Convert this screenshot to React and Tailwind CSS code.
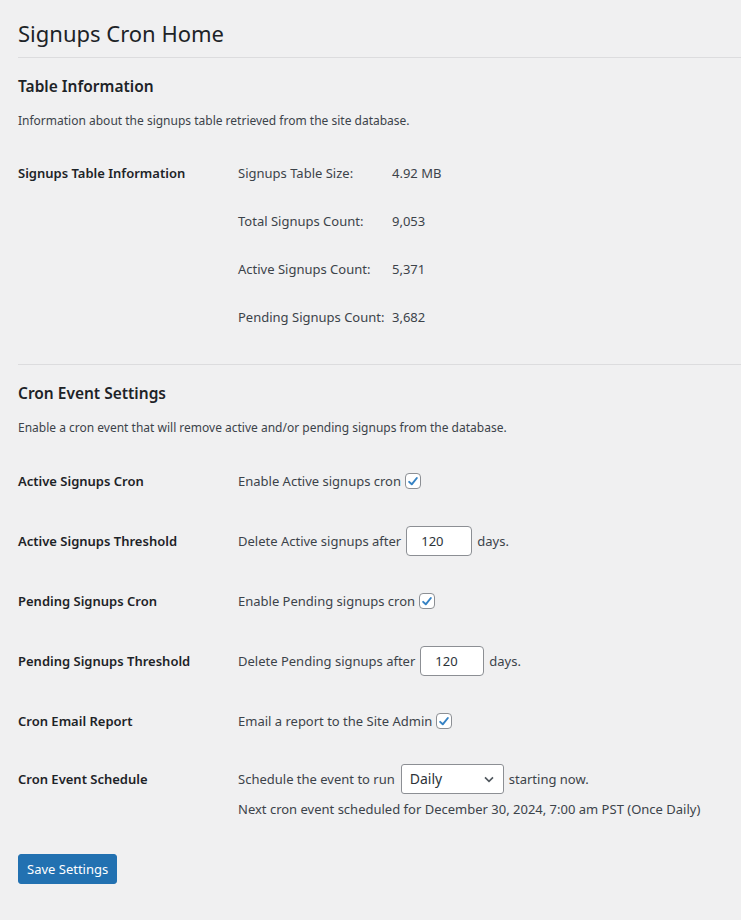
import React from 'react';

const font = { fontFamily: '"Noto Sans", "Open Sans", sans-serif' };

function Check() {
  return (
    <span className="inline-flex items-center justify-center w-4 h-4 ml-1 align-middle bg-white border border-[#8c8f94] rounded-[4px]">
      <svg viewBox="0 0 20 20" className="w-[15px] h-[15px]">
        <path d="M4.5 10.5 L8.2 14 L15.5 5" fill="none" stroke="#3582c4" strokeWidth="2.8" strokeLinecap="round" strokeLinejoin="round" />
      </svg>
    </span>
  );
}

function NumInput({ value, w }) {
  return (
    <span className={`inline-flex items-center h-[30px] ${w} mx-[5px] px-2 bg-white border border-[#8c8f94] rounded-[4px] text-[#2c3338]`}>
      <span className="ml-[6px]">{value}</span>
    </span>
  );
}

function Row({ label, children, h = 'h-[60px]' }) {
  return (
    <div className={`grid grid-cols-[220px_1fr] items-center ${h}`}>
      <div className="font-semibold text-[#1d2327]">{label}</div>
      <div>{children}</div>
    </div>
  );
}

const INFO = [
  ['Signups Table Size:', '4.92 MB'],
  ['Total Signups Count:', '9,053'],
  ['Active Signups Count:', '5,371'],
  ['Pending Signups Count:', '3,682'],
];

export default function App() {
  return (
    <div className="min-h-[920px] bg-[#f0f0f1] pl-[18px] text-[13px] leading-5 text-[#3c434a]" style={font}>
      <h1 className="pt-[18px] h-[48px] text-[22px] leading-[30px] text-[#1d2327]">Signups Cron Home</h1>
      <hr className="mt-[9px] border-0 h-px bg-[#dcdcde]" />

      <h2 className="mt-[17px] text-[15.5px] leading-[22px] font-semibold text-[#1d2327]">Table Information</h2>
      <p className="mt-[14px] text-[12px]">Information about the signups table retrieved from the site database.</p>

      <div className="grid grid-cols-[220px_1fr] mt-[12px] pb-[23px]">
        <div className="pt-[20px] font-semibold text-[#1d2327]">Signups Table Information</div>
        <div className="pt-[6px]">
          {INFO.map(([k, v]) => (
            <div key={k} className="grid grid-cols-[154px_1fr] items-center h-[48px]">
              <span>{k}</span>
              <span>{v}</span>
            </div>
          ))}
        </div>
      </div>

      <hr className="border-0 h-px bg-[#dcdcde]" />

      <h2 className="mt-[17px] text-[15.5px] leading-[22px] font-semibold text-[#1d2327]">Cron Event Settings</h2>
      <p className="mt-[14px] text-[12px]">Enable a cron event that will remove active and/or pending signups from the database.</p>

      <div className="mt-[13px]">
        <Row label="Active Signups Cron">
          <span className="inline-flex items-center">Enable Active signups cron <Check /></span>
        </Row>
        <Row label="Active Signups Threshold">
          <span className="inline-flex items-center">Delete Active signups after<NumInput value="120" w="w-[66px]" />days.</span>
        </Row>
        <Row label="Pending Signups Cron">
          <span className="inline-flex items-center">Enable Pending signups cron <Check /></span>
        </Row>
        <Row label="Pending Signups Threshold">
          <span className="inline-flex items-center">Delete Pending signups after<NumInput value="120" w="w-[64px]" />days.</span>
        </Row>
        <Row label="Cron Email Report">
          <span className="inline-flex items-center">Email a report to the Site Admin <Check /></span>
        </Row>
        <div className="grid grid-cols-[220px_1fr] pt-[13px] pb-[15px]">
          <div className="pt-[5px] font-semibold text-[#1d2327]">Cron Event Schedule</div>
          <div>
            <div className="flex items-center">
              <span>Schedule the event to run</span>
              <span className="inline-flex items-center justify-between h-[30px] w-[103px] ml-[6px] mr-[5px] pl-[8px] pr-[6px] bg-white border border-[#8c8f94] rounded-[3px] text-[14px] text-[#2c3338]">
                Daily
                <svg viewBox="0 0 20 20" className="w-4 h-4">
                  <path d="M5 8 L10 13 L15 8" fill="none" stroke="#50575e" strokeWidth="2" />
                </svg>
              </span>
              <span>starting now.</span>
            </div>
            <p className="mt-[5px]">Next cron event scheduled for December 30, 2024, 7:00 am PST (Once Daily)</p>
          </div>
        </div>
      </div>

      <button className="mt-[20px] h-[30px] px-[8px] bg-[#2271b1] border border-[#2271b1] rounded-[3px] text-white text-[13px]" style={font}>
        Save Settings
      </button>
    </div>
  );
}
